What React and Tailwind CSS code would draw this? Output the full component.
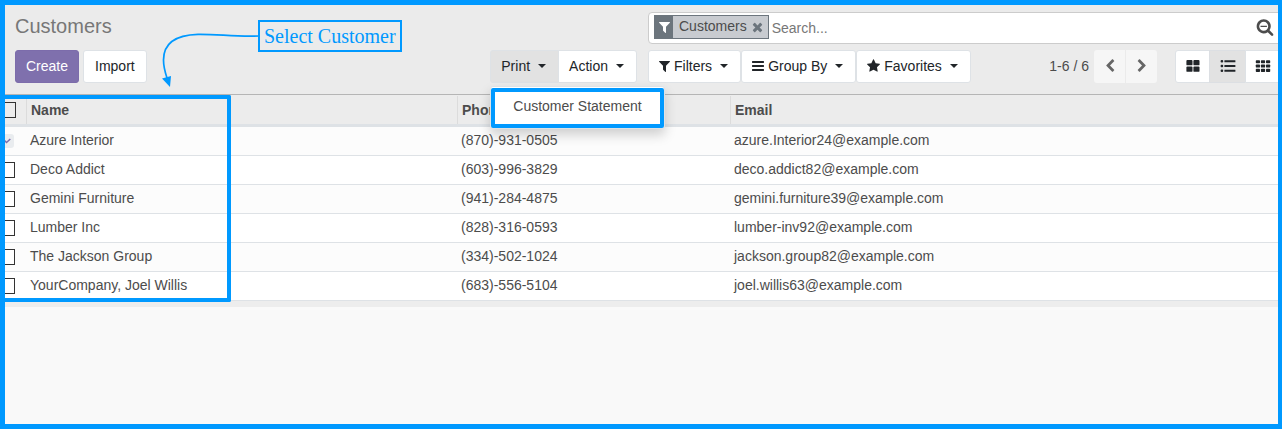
import React from 'react';

const ICONS = {
  filter: {
    box: '192 0 1408 1792',
    size: 'h-[14px] w-[11px]',
    d: 'M1595 295q17 41-14 70l-493 493v742q0 42-39 59-13 5-25 5-27 0-45-19l-256-256q-19-19-19-45v-486l-493-493q-31-29-14-70 17-39 59-39h1280q42 0 59 39z',
  },
  times: {
    box: '192 0 1408 1792',
    size: 'h-[14px] w-[11px]',
    d: 'M1490 1322q0 40-28 68l-136 136q-28 28-68 28t-68-28l-294-294-294 294q-28 28-68 28t-68-28l-136-136q-28-28-28-68t28-68l294-294-294-294q-28-28-28-68t28-68l136-136q28-28 68-28t68 28l294 294 294-294q28-28 68-28t68 28l136 136q28 28 28 68t-28 68l-294 294 294 294q28 28 28 68z',
  },
  star: {
    box: '64 0 1664 1792',
    size: 'h-[14px] w-[13px]',
    d: 'M1728 647q0 22-26 48l-363 354 86 500q1 7 1 20 0 21-10.5 35.5t-30.5 14.5q-19 0-40-12l-449-236-449 236q-22 12-40 12-21 0-31.5-14.5t-10.5-35.5q0-6 2-20l86-500-364-354q-25-27-25-48 0-37 56-46l502-73 225-455q19-41 49-41t49 41l225 455 502 73q56 9 56 46z',
  },
  bars: {
    box: '128 0 1536 1792',
    size: 'h-[14px] w-3',
    d: 'M1664 1344v128q0 26-19 45t-45 19h-1408q-26 0-45-19t-19-45v-128q0-26 19-45t45-19h1408q26 0 45 19t19 45zm0-512v128q0 26-19 45t-45 19h-1408q-26 0-45-19t-19-45v-128q0-26 19-45t45-19h1408q26 0 45 19t19 45zm0-512v128q0 26-19 45t-45 19h-1408q-26 0-45-19t-19-45v-128q0-26 19-45t45-19h1408q26 0 45 19t19 45z',
  },
  left: {
    box: '0 0 1792 1792',
    size: 'size-[14px]',
    d: 'M1427 301l-531 531 531 531q19 19 19 45t-19 45l-166 166q-19 19-45 19t-45-19l-742-742q-19-19-19-45t19-45l742-742q19-19 45-19t45 19l166 166q19 19 19 45t-19 45z',
  },
  right: {
    box: '0 0 1792 1792',
    size: 'size-[14px]',
    d: 'M1363 877l-742 742q-19 19-45 19t-45-19l-166-166q-19-19-19-45t19-45l531-531-531-531q-19-19-19-45t19-45l166-166q19-19 45-19t45 19l742 742q19 19 19 45t-19 45z',
  },
  searchMinus: {
    box: '0 0 1792 1792',
    size: 'size-[18px]',
    d: 'M1088 800v64q0 13-9.5 22.5t-22.5 9.5h-576q-13 0-22.5-9.5t-9.5-22.5v-64q0-13 9.5-22.5t22.5-9.5h576q13 0 22.5 9.5t9.5 22.5zm128 32q0-185-131.5-316.5t-316.5-131.5-316.5 131.5-131.5 316.5 131.5 316.5 316.5 131.5 316.5-131.5 131.5-316.5zm512 832q0 53-37.5 90.5t-90.5 37.5q-54 0-90-38l-343-342q-179 124-399 124-143 0-273.5-55.5t-225-150-150-225-55.5-273.5 55.5-273.5 150-225 225-150 273.5-55.5 273.5 55.5 225 150 150 225 55.5 273.5q0 220-124 399l343 343q37 37 37 90z',
  },
};

function Icon({ name }) {
  const { box, size, d } = ICONS[name];
  return (
    <svg viewBox={box} fill="currentColor" aria-hidden="true" className={`shrink-0 ${size}`}>
      <path d={d} />
    </svg>
  );
}

function Caret() {
  return (
    <svg viewBox="0 0 8 4" fill="currentColor" aria-hidden="true" className="h-1 w-2 shrink-0">
      <path d="M0 0h8L4 4z" />
    </svg>
  );
}

function MenuButton({ icon, label, className = '' }) {
  return (
    <button
      type="button"
      className={`flex h-[33px] items-center gap-2 border border-[#dee2e6] pr-3 pb-[2px] pl-[10px] whitespace-nowrap text-[#212529] ${className}`}
    >
      <span className="flex items-center gap-1">
        {icon && <Icon name={icon} />}
        {label}
      </span>
      <Caret />
    </button>
  );
}

function ViewIcon({ kind }) {
  return (
    <svg viewBox="0 0 16 14" fill="currentColor" aria-hidden="true" className="h-[14px] w-4">
      {kind === 'kanban' &&
        [1, 7.5].map((y) => [1.4, 8.4].map((x) => <rect key={`${x}-${y}`} x={x} y={y} width="6.1" height="5.3" rx="0.9" />))}
      {kind === 'list' &&
        [1.3, 6, 10.7].map((y) => (
          <g key={y}>
            <rect x="0.6" y={y - 0.3} width="2.6" height="2.5" rx="1" />
            <rect x="4.4" y={y} width="11" height="2" rx="0.3" />
          </g>
        ))}
      {kind === 'grid' &&
        [1.2, 5.5, 9.8].map((y) =>
          [0.8, 5.9, 11].map((x) => <rect key={`${x}-${y}`} x={x} y={y} width="4.2" height="3.1" rx="0.7" />),
        )}
    </svg>
  );
}

function RowCheckbox({ label, checked = false }) {
  if (checked) {
    return (
      <span className="relative -ml-1 block h-[14px] w-[13px]">
        <input
          type="checkbox"
          aria-label={label}
          defaultChecked
          className="block h-[14px] w-[13px] appearance-none rounded-[3px] bg-[#e9ecef]"
        />
        <svg viewBox="0 0 13 14" fill="none" aria-hidden="true" className="pointer-events-none absolute inset-0">
          <path d="M3.5 6.5l2 2 3.8-3.5" stroke="#7c6cab" strokeWidth="1.5" />
        </svg>
      </span>
    );
  }
  return (
    <input
      type="checkbox"
      aria-label={label}
      className="-ml-[6px] block size-4 appearance-none border border-[#333] bg-white"
    />
  );
}

const CUSTOMERS = [
  ['Azure Interior', '(870)-931-0505', 'azure.Interior24@example.com'],
  ['Deco Addict', '(603)-996-3829', 'deco.addict82@example.com'],
  ['Gemini Furniture', '(941)-284-4875', 'gemini.furniture39@example.com'],
  ['Lumber Inc', '(828)-316-0593', 'lumber-inv92@example.com'],
  ['The Jackson Group', '(334)-502-1024', 'jackson.group82@example.com'],
  ['YourCompany, Joel Willis', '(683)-556-5104', 'joel.willis63@example.com'],
];

export default function App() {
  return (
    <div className="min-h-screen overflow-hidden border-5 border-r-4 border-[#0099ff] bg-[#f9f9f9] font-['Liberation_Sans',Arial,sans-serif] text-[14px] leading-5 text-[#4c4c4c]">
      <header className="relative border-b border-[#b5b5b5] bg-[#ebebeb] pt-[7px] pb-[11px]">
        <div className="-mr-[13px] grid grid-cols-2 gap-y-[6px]">
          <h1 className="flex h-8 items-center pb-1 pl-[10px] text-[20px] leading-6 text-[#777]">Customers</h1>

          <div className="flex h-8 items-center rounded border border-[#ccc] bg-white pr-4 pl-[5px]">
            <div className="mb-[2px] flex h-6 shrink-0 items-stretch border border-[#6c757d] bg-[#c8cbd0]">
              <span className="flex w-[18px] items-center justify-center bg-[#6c757d] text-white">
                <Icon name="filter" />
              </span>
              <span className="flex items-center pr-[5px] pb-[2px] pl-[6px]">Customers</span>
              <button type="button" aria-label="Remove" className="flex items-center pr-[5px] text-[#6c757d]">
                <Icon name="times" />
              </button>
            </div>
            <input
              type="text"
              aria-label="Search"
              placeholder="Search..."
              className="h-6 min-w-0 flex-1 bg-transparent pl-[3px] outline-none placeholder:text-[#777]"
            />
            <button type="button" aria-label="Advanced search" className="pb-[2px] text-[#4c4c4c]">
              <Icon name="searchMinus" />
            </button>
          </div>

          <div className="flex items-start justify-between pr-[11px] pl-[10px]">
            <div className="flex gap-1">
              <button type="button" className="h-[33px] rounded-[3px] border border-[#7c6cab] bg-[#7f70ad] px-[10px] pb-[2px] text-white">
                Create
              </button>
              <button type="button" className="h-[33px] rounded-[3px] border border-[#dee2e6] bg-white px-[11px] pb-[2px] text-[#212529]">
                Import
              </button>
            </div>
            <div className="flex">
              <div className="relative">
                <MenuButton label="Print" className="rounded-l-[3px] bg-[#e2e2e2]" />
                <div className="absolute top-9 left-0 z-20 rounded-[3px] border border-[#dee2e6] bg-white pt-px shadow-[0_6px_12px_rgba(0,0,0,0.18)]">
                  <a
                    href="#customer-statement"
                    className="block rounded-[2px] border-4 border-[#0099ff] px-[18px] pt-1 pb-2 whitespace-nowrap"
                  >
                    Customer Statement
                  </a>
                </div>
              </div>
              <MenuButton label="Action" className="-ml-px rounded-r-[3px] bg-white" />
            </div>
          </div>

          <div className="flex items-center justify-between pr-[9px]">
            <div className="flex">
              <MenuButton icon="filter" label="Filters" className="rounded-[3px] bg-white" />
              <MenuButton icon="bars" label="Group By" className="rounded-[3px] bg-white" />
              <MenuButton icon="star" label="Favorites" className="rounded-[3px] bg-white" />
            </div>
            <div className="flex items-center">
              <span className="mr-[5px] pb-[2px]">1-6 / 6</span>
              <div className="mr-[18px] flex gap-px text-[#666]">
                <button type="button" aria-label="Previous" className="flex h-[33px] w-[31px] items-center justify-center rounded-l-[3px] bg-[#f6f6f6] pb-[2px]">
                  <Icon name="left" />
                </button>
                <button type="button" aria-label="Next" className="flex h-[33px] w-[31px] items-center justify-center rounded-r-[3px] bg-[#f6f6f6] pb-[2px]">
                  <Icon name="right" />
                </button>
              </div>
              <div className="flex text-[#212529]">
                <button type="button" aria-label="Kanban view" className="flex h-[33px] w-[35px] items-center justify-center rounded-l-[3px] border border-[#dee2e6] bg-white pb-[2px]">
                  <ViewIcon kind="kanban" />
                </button>
                <button type="button" aria-label="List view" className="-ml-px flex h-[33px] w-[37px] items-center justify-center border border-[#dcdfe3] bg-[#e2e2e2] pb-[2px]">
                  <ViewIcon kind="list" />
                </button>
                <button type="button" aria-label="Grid view" className="-ml-px flex h-[33px] w-[37px] items-center justify-center rounded-r-[3px] border border-[#dee2e6] bg-white pr-[2px] pb-[2px]">
                  <ViewIcon kind="grid" />
                </button>
              </div>
            </div>
          </div>
        </div>

        <div className="absolute top-[15px] left-[253px] border-2 border-[#0099ff] px-1 pt-px pb-[3px] font-['Liberation_Serif',serif] text-[20px] leading-6 whitespace-nowrap text-[#0099ff]">
          <span className="block pt-[2px] leading-[22px]">Select Customer</span>
        </div>
        <svg viewBox="150 20 110 70" fill="none" aria-hidden="true" className="pointer-events-none absolute top-[15px] left-[145px] h-[70px] w-[110px]">
          <path
            d="M259 36C235 37 218 34 198 34.3C174 35 163.500 44 163.500 60C163.500 66 165 72 167 78"
            stroke="#0099ff"
            strokeWidth="1.7"
          />
          <path d="M162 78.500L171 76L170 87z" fill="#0099ff" />
        </svg>
      </header>

      <main className="relative border-b-6 border-[#ededed]">
        <table className="w-full table-fixed border-collapse text-left">
          <colgroup>
            <col className="w-[21px]" />
            <col className="w-[431px]" />
            <col className="w-[273px]" />
            <col />
          </colgroup>
          <thead>
            <tr className="h-[32px] bg-[#ececec] shadow-[inset_0_-3px_0_#dee2e6]">
              <th className="p-0 pb-[2px]">
                <input
                  type="checkbox"
                  aria-label="Select all"
                  className="-ml-[5px] block size-4 appearance-none border border-[#333] bg-[#ececec]"
                />
              </th>
              {['Name', 'Phone', 'Email'].map((title) => (
                <th key={title} className="p-0 pb-[2px] font-bold">
                  <span className="flex h-[28px] items-center border-l border-[#dcdcdc] pl-1">{title}</span>
                </th>
              ))}
            </tr>
          </thead>
          <tbody>
            {CUSTOMERS.map(([name, phone, email], i) => (
              <tr key={name} className="h-[29px] bg-white shadow-[inset_0_-1px_0_#dee2e6] odd:bg-[#fcfcfc]">
                <td className="p-0 pb-[2px]">
                  <RowCheckbox label={`Select ${name}`} checked={i === 0} />
                </td>
                <td className="p-0 pb-1 pl-1">{name}</td>
                <td className="p-0 pb-1 pl-1">{phone}</td>
                <td className="p-0 pb-1 pl-1">{email}</td>
              </tr>
            ))}
          </tbody>
        </table>
        <div className="pointer-events-none absolute top-0 -bottom-px left-0 w-[226px] rounded-r-[2px] border-4 border-l-0 border-[#0099ff]" />
      </main>
    </div>
  );
}
